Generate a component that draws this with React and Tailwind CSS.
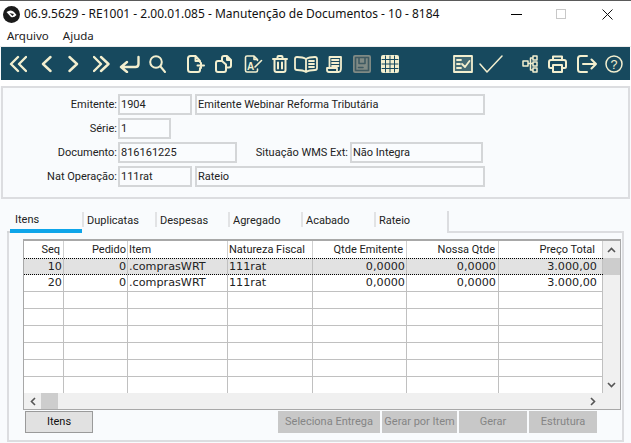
import React from "react";

const sans = "font-['Roboto',sans-serif]";

const Icon = ({ w, h = 18, className = "", sw = 2, children }) => (
  <svg
    width={w}
    height={h}
    viewBox={`0 0 ${w} ${h}`}
    fill="none"
    stroke="#f3efcf"
    strokeWidth={sw}
    strokeLinecap="round"
    strokeLinejoin="round"
    className={`shrink-0 ${className}`}
  >
    {children}
  </svg>
);

const Field = ({ className = "", children }) => (
  <div className={`h-[21px] border-2 border-[#d4d6d8] bg-[#fafcfe] px-[1px] pt-[1px] flex items-center text-[11px] text-[#222] whitespace-nowrap overflow-hidden ${className}`}>
    {children}
  </div>
);

const Label = ({ children }) => (
  <div className="w-[115px] pr-[1px] pt-[1px] text-right text-[11px] text-[#222] whitespace-nowrap">{children}</div>
);

const columns = [
  { label: "Seq", w: "w-[40px]", head: "pr-[3px] text-right", cell: "pr-[1px] text-right" },
  { label: "Pedido", w: "w-[64px]", head: "pr-[1px] text-right", cell: "pr-[1px] text-right" },
  { label: "Item", w: "w-[100px]", head: "pl-[1px] text-left", cell: "pl-[1px] text-left" },
  { label: "Natureza Fiscal", w: "w-[85px]", head: "pl-[1px] text-left", cell: "pl-[1px] text-left" },
  { label: "Qtde Emitente", w: "w-[94px]", head: "pr-[3px] text-right", cell: "pr-[1px] text-right" },
  { label: "Nossa Qtde", w: "w-[92px]", head: "pr-[3px] text-right", cell: "pr-[2px] text-right" },
  { label: "Preço Total", w: "w-[104px]", head: "pr-[7px] text-right", cell: "pr-[5px] text-right" },
];

const rows = [
  ["10", "0", ".comprasWRT", "111rat", "0,0000", "0,0000", "3.000,00"],
  ["20", "0", ".comprasWRT", "111rat", "0,0000", "0,0000", "3.000,00"],
  [],
  [],
  [],
  [],
  [],
  [],
];

const tabs = ["Duplicatas", "Despesas", "Agregado", "Acabado", "Rateio"];

const Toolbar = () => (
  <div className="mx-[1px] h-[33px] bg-[#17495e] flex items-center">
    <Icon w={18} sw={2.4} className="ml-[8px]"><path d="M9 2 L2 9 L9 16 M17 2 L10 9 L17 16" /></Icon>
    <Icon w={11} sw={2.4} className="ml-[14px]"><path d="M9.5 2 L2 9 L9.5 16" /></Icon>
    <Icon w={11} sw={2.4} className="ml-[16px]"><path d="M1.5 2 L9 9 L1.5 16" /></Icon>
    <Icon w={17} sw={2.4} className="ml-[14px]"><path d="M1 2 L8 9 L1 16 M8 2 L15.5 9 L8 16" /></Icon>
    <Icon w={21} sw={2.4} className="ml-[9px]"><path d="M19.5 2 V9 Q19.5 12 16.5 12 H3 M8 7 L2 12 L8 17" /></Icon>
    <Icon w={17} className="ml-[9px]"><circle cx="7" cy="7" r="5.8" /><path d="M11.5 11.5 L16 17" /></Icon>
    <Icon w={18} className="ml-[21px]"><path d="M8.5 1 H3.5 Q1 1 1 3.5 V14.5 Q1 17 3.5 17 H11 Q13 17 13 15 V13 M8.5 1 L13 6 V7 M8.5 1 V6 H13 M10.5 10.5 H17 M14 8 V13" /></Icon>
    <Icon w={17} className="ml-[10px]"><path d="M7 6 V3 Q7 1 9 1 H12 L16 5 V10.5 Q16 12.5 14 12.5 H11 M12 1 V5 H16" /><path d="M3 6 H7 L11 9.5 V15 Q11 17 9 17 H3 Q1 17 1 15 V8 Q1 6 3 6 Z" /></Icon>
    <Icon w={19} sw={1.6} className="ml-[12px]">
      <path d="M10 1 H3 Q1.5 1 1.5 2.5 V15.5 Q1.5 17 3 17 H12 Q13.5 17 13.5 15.5 V14 M10 1 L13.5 4.5 V5.5 M10 1 V4.5 H13.5 M11 12 L17.5 5.5" />
      <text x="3" y="15" fill="#f3efcf" stroke="none" fontSize="10" fontWeight="700" fontFamily="Liberation Sans">A</text>
    </Icon>
    <Icon w={16} className="ml-[9px]"><path d="M1 4 H15 M5.5 4 V2 Q5.5 1 6.5 1 H9.5 Q10.5 1 10.5 2 V4 M2.5 4 V15 Q2.5 17 4.5 17 H11.5 Q13.5 17 13.5 15 V4 M6 7.5 V13.5 M10 7.5 V13.5" /></Icon>
    <Icon w={24} sw={1.8} className="ml-[6px]"><path d="M12 4 Q9 2 3 2 Q1 2 1 4 V13 Q1 15 3 15 Q9 15 12 17 Q15 15 21 15 Q23 15 23 13 V4 Q23 2 21 2 Q15 2 12 4 Z M12 4 V17 M15 6 H20 M15 9 H20 M15 12 H20" /></Icon>
    <Icon w={16} sw={1.8} className="ml-[8px]"><path d="M3.5 13 V2 H15 V13 Q15 17 12.5 17 H3 Q1 17 1 15 V13 H11 V16 M6 5 H12.5 M6 8 H12.5 M6 11 H12.5" /></Icon>
    <Icon w={18} className="ml-[11px]">
      <rect x="0" y="0" width="18" height="18" rx="2" fill="#7f8a85" stroke="none" />
      <path d="M2.5 2.5 H15.5 V15.5 H2.5 Z M6 2.5 V8.5 H12 V2.5 M5.5 12.5 H10" stroke="#3f5a62" strokeWidth="1.6" />
    </Icon>
    <Icon w={18} sw={0} className="ml-[10px]">
      <rect x="0" y="0" width="18" height="18" rx="2" fill="#f3efcf" stroke="none" />
      <path d="M4.5 1 V17 M9 1 V17 M13.5 1 V17 M1 4.5 H17 M1 9 H17 M1 13.5 H17" stroke="#17495e" strokeWidth="1" />
    </Icon>
    <Icon w={20} className="ml-[54px]" sw={1.8}>
      <rect x="1" y="1" width="18" height="16" fill="#f3efcf" fillOpacity="0.2" />
      <path d="M4 5 H8 M4 9 H7 M4 13 H8 M9 9 L12 12 L16.5 6" />
    </Icon>
    <Icon w={24} sw={1.5} className="ml-[6px]"><path d="M1 9 L8 17 L23 1" /></Icon>
    <Icon w={16} sw={1.5} className="ml-[19px]"><path d="M1 6 H6 V11 H1 Z M11 1 H15 V5 H11 Z M11 7 H15 V11 H11 Z M11 13 H15 V17 H11 Z M6 8.5 H11 M8.5 3 H11 M8.5 15 H11 M8.5 3 V15" /></Icon>
    <Icon w={19} className="ml-[10px]"><path d="M5 5 V1.5 H14 V5 M4.5 13 H2.5 Q1 13 1 11.5 V7 Q1 5 3 5 H16 Q18 5 18 7 V11.5 Q18 13 16.5 13 H14.5 M5 10 H14 V17 H5 Z" /></Icon>
    <Icon w={20} className="ml-[10px]"><path d="M10 1 H3.5 Q1 1 1 3.5 V14.5 Q1 17 3.5 17 H10 M6 9 H19 M14.5 4.5 L19 9 L14.5 13.5" /></Icon>
    <Icon w={18} sw={1.5} className="ml-[8px]">
      <circle cx="9" cy="9" r="8" />
      <text x="5.6" y="13.5" fill="#f3efcf" stroke="none" fontSize="12.5" fontFamily="Liberation Sans">?</text>
    </Icon>
  </div>
);

export default function App() {
  return (
    <div className={`w-[631px] h-[443px] overflow-hidden bg-[#f9fbfd] flex flex-col ${sans}`}>
      {/* title bar */}
      <div className="h-[27px] shrink-0 bg-white border-t border-[#5a5a5a] flex items-center">
        <svg width="17" height="17" viewBox="0 0 17 17" className="ml-[3px] shrink-0">
          <circle cx="8.5" cy="8.5" r="8.5" fill="#1a1a1a" />
          <path d="M3.5 6 Q8 3 11 6 L13.5 9 Q11 12 8 11 Z" fill="#fff" />
          <path d="M6.5 7 L11 8 L9.5 10 Z" fill="#1a1a1a" />
        </svg>
        <div className="ml-[4px] w-[387px] text-[12px] font-['Noto_Sans',sans-serif] text-[#111] whitespace-nowrap">
          06.9.5629 - RE1001 - 2.00.01.085 - Manutenção de Documentos - 10 - 8184
        </div>
        <div className="ml-[100px] w-[11px] h-[1px] bg-black shrink-0" />
        <div className="ml-[34px] w-[10px] h-[10px] border border-[#c8c8c8] shrink-0" />
        <svg width="11" height="11" viewBox="0 0 11 11" className="ml-[36px] shrink-0" stroke="#111" fill="none">
          <path d="M0.5 0.5 L10.5 10.5 M10.5 0.5 L0.5 10.5" />
        </svg>
      </div>

      {/* menu */}
      <div className="h-[17px] shrink-0 bg-white flex items-center gap-[14px] pl-[7px] text-[11.5px] font-['Noto_Sans',sans-serif] text-[#222]">
        <span>Arquivo</span>
        <span>Ajuda</span>
      </div>
      <div className="h-[2px] shrink-0 bg-white" />
      <div className="h-[1px] shrink-0 bg-[#ededed]" />

      <Toolbar />
      <div className="h-[6px] shrink-0 bg-white" />

      {/* header form */}
      <div className="h-[113px] shrink-0 mx-[1px] border-2 border-[#dcdde0] pt-[6px] flex flex-col gap-[3px]">
        <div className="flex items-center">
          <Label>Emitente:</Label>
          <Field className="w-[74px]">1904</Field>
          <Field className="w-[290px] ml-[3px]">Emitente Webinar Reforma Tributária</Field>
        </div>
        <div className="flex items-center">
          <Label>Série:</Label>
          <Field className="w-[53px]">1</Field>
        </div>
        <div className="flex items-center">
          <Label>Documento:</Label>
          <Field className="w-[119px]">816161225</Field>
          <div className="w-[111px] pt-[1px] text-right text-[11px] text-[#222] whitespace-nowrap">Situação WMS Ext:</div>
          <Field className="w-[133px] ml-[2px]">Não Integra</Field>
        </div>
        <div className="flex items-center">
          <Label>Nat Operação:</Label>
          <Field className="w-[74px]">111rat</Field>
          <Field className="w-[290px] ml-[3px]">Rateio</Field>
        </div>
      </div>

      {/* tabs */}
      <div className="mt-[12px] ml-[7px] w-[617px] h-[22px] shrink-0 flex text-[11px] text-[#222]">
        <div className="w-[3px] border-b-2 border-[#d4d6d8]" />
        <div className="w-[72px] border-b-4 border-[#0ea5e9] pl-[5px] leading-[18px]">Itens</div>
        {tabs.map((tab) => (
          <div key={tab} className="w-[73px] h-[15px] pl-[3px] leading-[18px] border-l-2 border-[#e2e3e5] mt-[1px]">
            {tab}
          </div>
        ))}
        <div className="flex-1 border-l-2 border-b-2 border-[#dcdde0] self-stretch" />
      </div>

      {/* tab panel */}
      <div className="ml-[7px] w-[617px] h-[209px] shrink-0 border-x-2 border-b-2 border-[#dcdde0] pl-[14px] pt-[6px]">
        <div className="w-[598px] h-[171px] border border-t-2 border-[#a8a8a8] bg-white flex flex-col">
          <div className="flex h-[152px]">
            <div className="w-[579px] overflow-hidden text-[#222]">
              <div className="flex h-[17px] items-center text-[11px] text-[#222]">
                {columns.map((c) => (
                  <div key={c.label} className={`${c.w} h-full shrink-0 leading-[18px] border-r border-[#d0d0d0] whitespace-nowrap ${c.head}`}>
                    {c.label}
                  </div>
                ))}
              </div>
              {rows.map((row, i) => (
                <div
                  key={i}
                  className={`flex h-[17px] text-[11.2px] font-['DejaVu_Sans',sans-serif] ${
                    i === 0
                      ? "bg-[#e2e2e2] border-y border-dotted border-black"
                      : "border-b border-[#c0c0c0]"
                  }`}
                >
                  {columns.map((c, j) => (
                    <div key={c.label} className={`${c.w} shrink-0 leading-[16px] border-r border-[#c0c0c0] whitespace-nowrap ${c.cell}`}>
                      {row[j]}
                    </div>
                  ))}
                </div>
              ))}
            </div>
            <div className="flex-1 bg-[#f0f0f0] flex flex-col items-center">
              <svg width="9" height="6" viewBox="0 0 9 6" className="mt-[6px]" fill="none" stroke="#555" strokeWidth="1.6"><path d="M1 5 L4.5 1.5 L8 5" /></svg>
              <div className="w-full h-[17px] mt-[5px] bg-[#cdcdcd]" />
              <svg width="9" height="6" viewBox="0 0 9 6" className="mt-auto mb-[5px]" fill="none" stroke="#555" strokeWidth="1.6"><path d="M1 1 L4.5 4.5 L8 1" /></svg>
            </div>
          </div>
          <div className="flex-1 bg-[#f0f0f0] flex items-center">
            <svg width="6" height="9" viewBox="0 0 6 9" className="ml-[6px]" fill="none" stroke="#555" strokeWidth="1.6"><path d="M5 1 L1.5 4.5 L5 8" /></svg>
            <div className="w-[17px] h-full ml-[5px] bg-[#cdcdcd]" />
            <svg width="6" height="9" viewBox="0 0 6 9" className="ml-auto mr-[24px]" fill="none" stroke="#555" strokeWidth="1.6"><path d="M1 1 L4.5 4.5 L1 8" /></svg>
          </div>
        </div>

        {/* buttons */}
        <div className="flex mt-[1px] ml-[2px] text-[11px]">
          <button className="w-[68px] h-[22px] bg-[#e1e1e1] border border-[#9a9a9a] text-[#111]">Itens</button>
          <button className="ml-[185px] w-[102px] h-[22px] bg-[#c8c8c8] text-[#858585] whitespace-nowrap">Seleciona Entrega</button>
          <button className="ml-[2px] w-[75px] h-[22px] bg-[#c8c8c8] text-[#858585] whitespace-nowrap">Gerar por Item</button>
          <button className="ml-[2px] w-[68px] h-[22px] bg-[#c8c8c8] text-[#858585]">Gerar</button>
          <button className="ml-[2px] w-[68px] h-[22px] bg-[#c8c8c8] text-[#858585]">Estrutura</button>
        </div>
      </div>
    </div>
  );
}
